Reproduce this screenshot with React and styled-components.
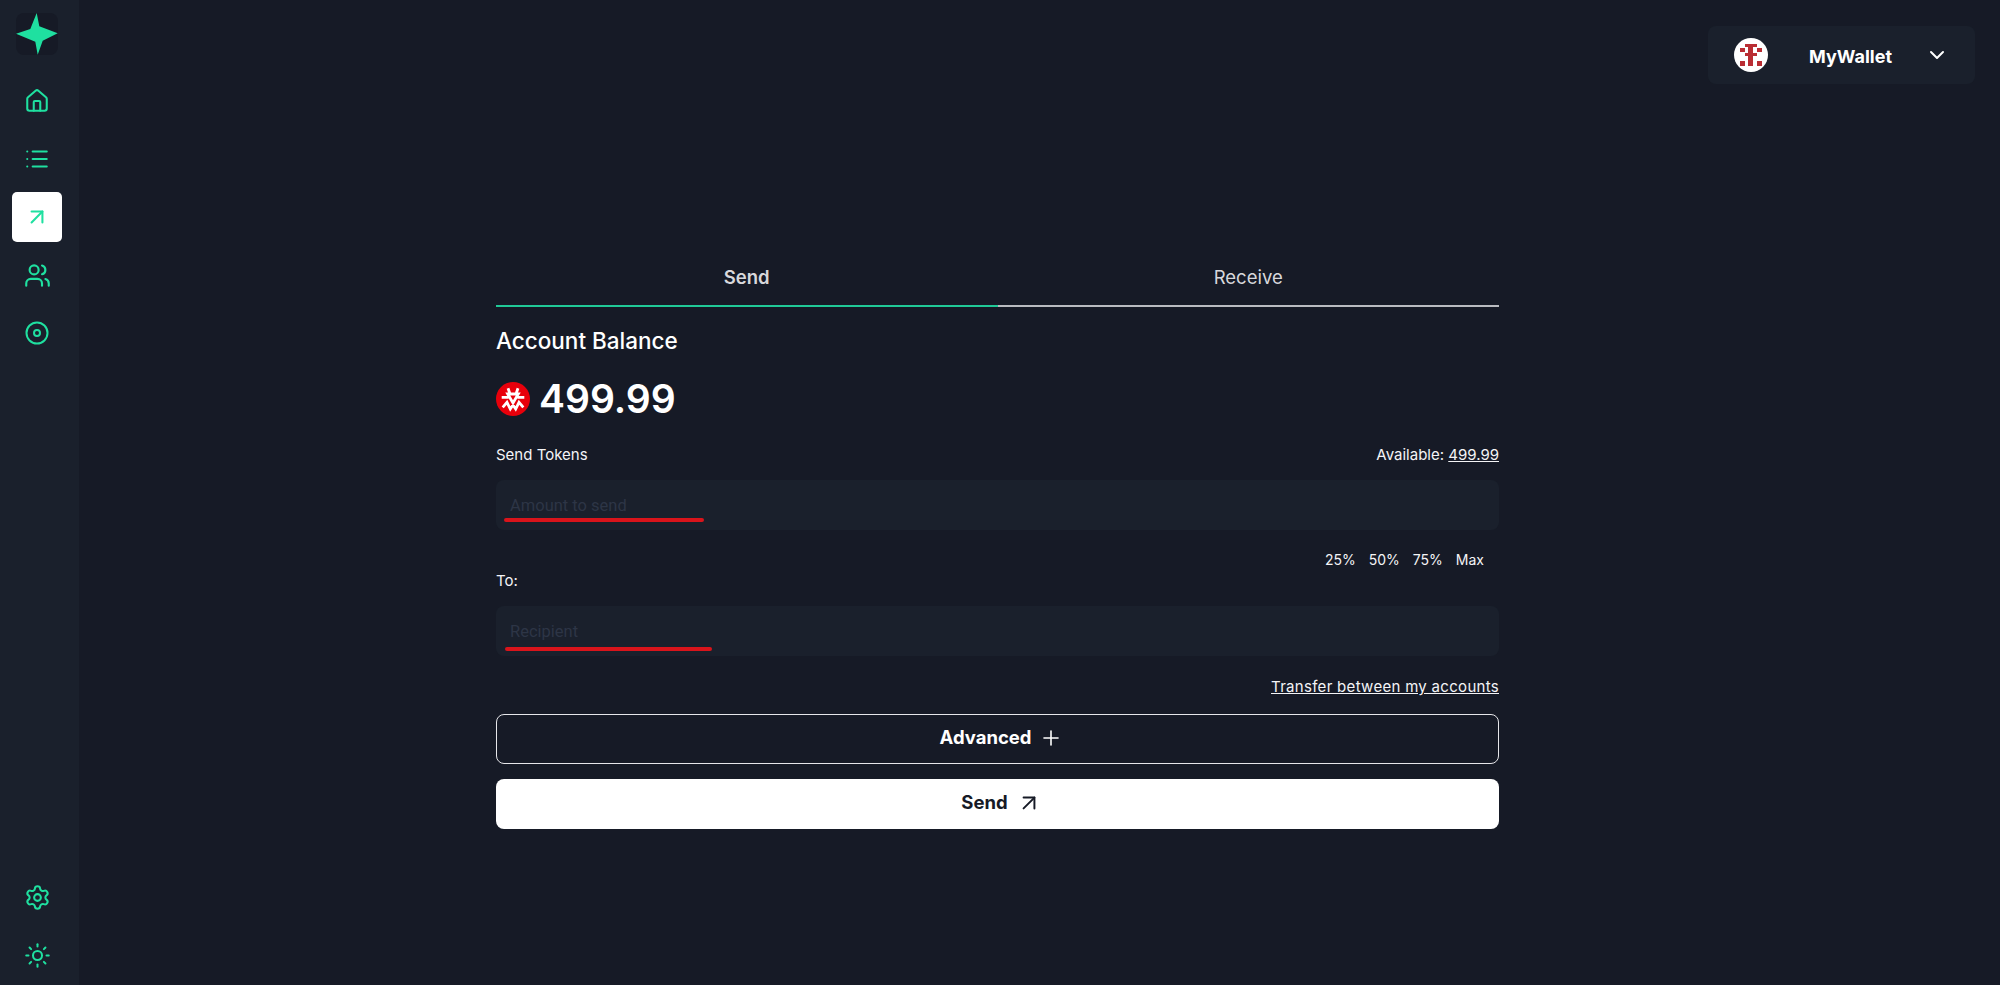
import styled, { createGlobalStyle } from 'styled-components';
import { House, List, ArrowUpRight, Users, Settings, Sun, ChevronDown, Plus } from 'lucide-react';

const GlobalStyle = createGlobalStyle`
  * {
    box-sizing: border-box;
  }
  body {
    margin: 0;
    background: #161a26;
    color: #fff;
    font-family: Inter, "Open Sans", sans-serif;
  }
`;

function Logo() {
  return (
    <svg width="42" height="42" viewBox="0 0 42 42">
      <path d="M20.7 0 L23.3 13.3 L41.7 20.3 L26.7 27.7 L21.7 41.7 L19.3 28.7 L0 20.7 L14.3 16 Z" fill="#1fe0a0" />
    </svg>
  );
}

function TargetIcon() {
  return (
    <svg width="24" height="24" viewBox="0 0 24 24" fill="none" stroke="currentColor" strokeWidth="2">
      <circle cx="12" cy="12" r="10.5" />
      <circle cx="12" cy="12" r="3" />
    </svg>
  );
}

const avatarPixels = [
  [11, 6, 12, 3], [6, 10, 5, 4], [23, 10, 5, 4], [14, 9, 5, 19],
  [11, 15, 12, 3], [6, 23, 5, 5], [23, 23, 5, 5],
];

function Avatar() {
  return (
    <svg width="34" height="34" viewBox="0 0 34 34">
      <circle cx="17" cy="17" r="17" fill="#fff" />
      {avatarPixels.map(([x, y, w, h]) => (
        <rect key={`${x}-${y}`} x={x} y={y} width={w} height={h} fill="#b92d33" />
      ))}
    </svg>
  );
}

function TokenIcon() {
  return (
    <svg width="34" height="34" viewBox="0 0 34 34">
      <circle cx="17" cy="17" r="17" fill="#e8000b" />
      <path
        d="M11.7 12 L22.3 12 L17 21 Z M12 6.3 L14 12 M22 6.3 L20 12 M5.7 15.3 L12.5 15.3 M28.3 15.3 L21.5 15.3 M6.7 25.3 L11 20.3 L14.3 27 L17 23 L19.7 27 L23 20.3 L27.3 25.3"
        fill="none"
        stroke="#fff"
        strokeWidth="2.8"
      />
    </svg>
  );
}

const topItems = [
  { id: 'home', icon: <House size={26} strokeWidth={1.9} /> },
  { id: 'list', icon: <List size={26} strokeWidth={1.9} /> },
  { id: 'send', icon: <ArrowUpRight size={26} strokeWidth={1.9} />, active: true },
  { id: 'users', icon: <Users size={27} strokeWidth={1.9} /> },
  { id: 'target', icon: <TargetIcon /> },
];

const percents = ['25%', '50%', '75%', 'Max'];

export default function App() {
  return (
    <Page>
      <GlobalStyle />
      <Sidebar>
        <NavGroup>
          <LogoBox>
            <Logo />
          </LogoBox>
          {topItems.map((item) => (
            <NavItem key={item.id} $active={item.active}>
              {item.icon}
            </NavItem>
          ))}
        </NavGroup>
        <NavGroup>
          <NavItem>
            <Settings size={27} strokeWidth={1.8} />
          </NavItem>
          <NavItem>
            <Sun size={27} strokeWidth={1.8} />
          </NavItem>
        </NavGroup>
      </Sidebar>

      <Main>
        <Header>
          <WalletButton>
            <Avatar />
            <WalletName>MyWallet</WalletName>
            <ChevronDown size={24} strokeWidth={2} />
          </WalletButton>
        </Header>

        <Form>
          <Tabs>
            <Tab $active>Send</Tab>
            <Tab>Receive</Tab>
          </Tabs>

          <BalanceTitle>Account Balance</BalanceTitle>
          <BalanceRow>
            <TokenIcon />
            <BalanceValue>499.99</BalanceValue>
          </BalanceRow>

          <LabelRow>
            <SmallText>Send Tokens</SmallText>
            <SmallText>
              Available: <Underlined>499.99</Underlined>
            </SmallText>
          </LabelRow>
          <InputWrap>
            <Field placeholder="Amount to send" />
            <RedMark $left={8} $bottom={8} $width={200} />
          </InputWrap>

          <PercentRow>
            {percents.map((p) => (
              <PercentText key={p}>{p}</PercentText>
            ))}
          </PercentRow>
          <ToLabel>To:</ToLabel>
          <InputWrap>
            <Field placeholder="Recipient" />
            <RedMark $left={9} $bottom={5} $width={207} />
          </InputWrap>

          <TransferRow>
            <TransferLink>Transfer between my accounts</TransferLink>
          </TransferRow>

          <OutlineButton>
            Advanced
            <Plus size={24} strokeWidth={1.6} />
          </OutlineButton>
          <SolidButton>
            Send
            <ArrowUpRight size={26} strokeWidth={1.8} />
          </SolidButton>
        </Form>
      </Main>
    </Page>
  );
}

const Page = styled.div`
  display: flex;
  width: 100%;
  height: 985px;
  overflow: hidden;
`;

const Sidebar = styled.aside`
  width: 79px;
  flex: none;
  height: 100%;
  background: #1a202c;
  display: flex;
  flex-direction: column;
  justify-content: space-between;
  padding: 13px 5px 5px 0;
`;

const NavGroup = styled.nav`
  display: flex;
  flex-direction: column;
  align-items: center;
  gap: 8px;
`;

const LogoBox = styled.div`
  width: 42px;
  height: 42px;
  border-radius: 8px;
  background: #161a26;
  margin-bottom: 13px;
`;

const NavItem = styled.div`
  width: 50px;
  height: 50px;
  border-radius: 5px;
  display: flex;
  align-items: center;
  justify-content: center;
  color: #1fe0a0;
  background: ${(p) => (p.$active ? '#fff' : 'transparent')};
`;

const Main = styled.main`
  flex: 1;
  min-width: 0;
`;

const Header = styled.header`
  display: flex;
  justify-content: flex-end;
  padding: 26px 25px 0 0;
`;

const WalletButton = styled.div`
  width: 267px;
  height: 58px;
  border-radius: 8px;
  background: #1a202c;
  display: flex;
  align-items: center;
  padding: 0 26px;
  justify-content: space-between;
`;

const WalletName = styled.span`
  font-size: 18px;
  font-weight: 700;
  margin: 2px 0 0 8px;
`;

const Form = styled.section`
  width: 1003px;
  margin: 170px 0 0 417px;
`;

const Tabs = styled.div`
  display: flex;
`;

const Tab = styled.div`
  flex: 1;
  height: 53px;
  padding-top: 12px;
  text-align: center;
  font-size: 18.5px;
  font-weight: ${(p) => (p.$active ? 600 : 400)};
  color: #d8d8dc;
  border-bottom: 2px solid ${(p) => (p.$active ? '#20c997' : '#b9bbc0')};
`;

const BalanceTitle = styled.h2`
  margin: 21px 0 0;
  font-size: 22.5px;
  line-height: 26px;
  font-weight: 500;
`;

const BalanceRow = styled.div`
  display: flex;
  align-items: center;
  gap: 9px;
  margin-top: 25px;
  height: 40px;
`;

const BalanceValue = styled.div`
  font-size: 39px;
  font-weight: 600;
  line-height: 40px;
`;

const LabelRow = styled.div`
  display: flex;
  justify-content: space-between;
  margin-top: 27px;
`;

const SmallText = styled.span`
  font-size: 15px;
  line-height: 18px;
  color: #f4f4f6;
`;

const PercentText = styled(SmallText)`
  font-size: 14px;
`;

const Underlined = styled.span`
  text-decoration: underline;
`;

const InputWrap = styled.div`
  position: relative;
  height: 50px;
  margin-top: 16px;
`;

const Field = styled.input`
  width: 100%;
  height: 100%;
  border: none;
  outline: none;
  border-radius: 8px;
  background: #1a202c;
  color: #fff;
  padding: 1px 14px 0;
  font-family: Roboto, sans-serif;
  font-size: 16.5px;

  &::placeholder {
    color: #2d3546;
  }
`;

const RedMark = styled.span`
  position: absolute;
  left: ${(p) => p.$left}px;
  bottom: ${(p) => p.$bottom}px;
  width: ${(p) => p.$width}px;
  height: 4px;
  border-radius: 2px;
  background: #d9141b;
`;

const PercentRow = styled.div`
  display: flex;
  justify-content: flex-end;
  gap: 13px;
  padding-right: 15px;
  margin-top: 21px;
`;

const ToLabel = styled(SmallText)`
  display: block;
  margin-top: 3px;
`;

const TransferRow = styled.div`
  display: flex;
  justify-content: flex-end;
  margin-top: 22px;
`;

const TransferLink = styled(SmallText)`
  text-decoration: underline;
  letter-spacing: 0.3px;
`;

const buttonBase = `
  width: 100%;
  height: 50px;
  display: flex;
  align-items: center;
  justify-content: center;
  border-radius: 8px;
  padding: 0 0 5px 8px;
  font-family: Inter, sans-serif;
  font-size: 18.5px;
  font-weight: 700;

  svg {
    margin-top: 3px;
  }
`;

const OutlineButton = styled.button`
  ${buttonBase}
  gap: 8px;
  margin-top: 18px;
  background: transparent;
  color: #fff;
  border: 1px solid #e6e6ea;
`;

const SolidButton = styled.button`
  ${buttonBase}
  gap: 8px;
  margin-top: 15px;
  background: #fff;
  color: #161a26;
  border: none;
`;
